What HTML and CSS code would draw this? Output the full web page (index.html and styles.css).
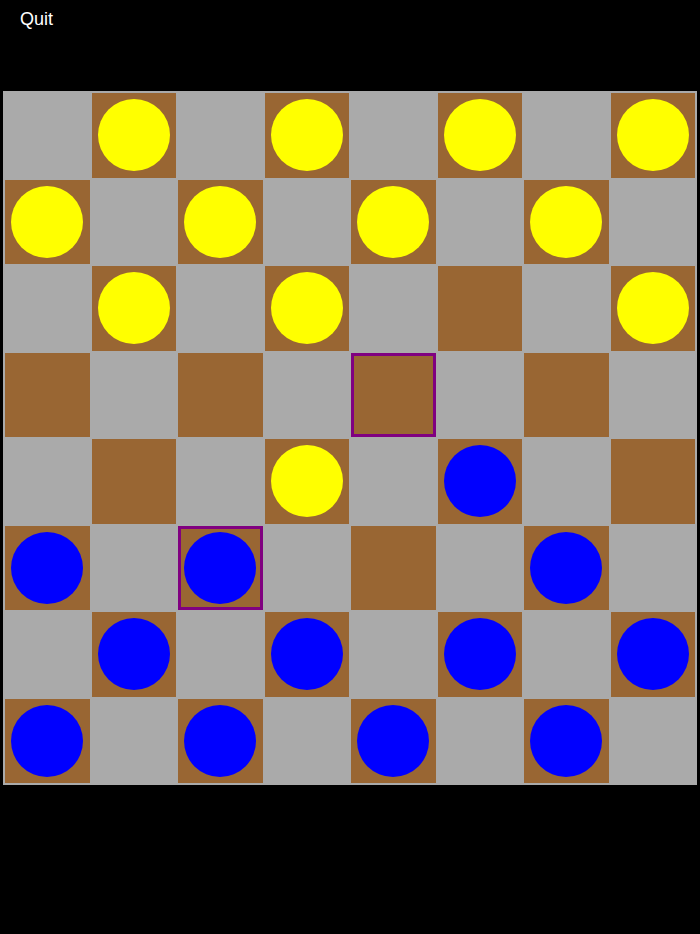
FILE: index.html
```html
<!DOCTYPE html>
<html>
<head>
<meta charset="utf-8">
<link rel="stylesheet" href="styles.css">
</head>
<body>
<div class="header"><span class="quit">Quit</span></div>
<div class="board">
  <div class="cell"></div><div class="cell dark"><div class="piece yellow"></div></div><div class="cell"></div><div class="cell dark"><div class="piece yellow"></div></div><div class="cell"></div><div class="cell dark"><div class="piece yellow"></div></div><div class="cell"></div><div class="cell dark"><div class="piece yellow"></div></div>
  <div class="cell dark"><div class="piece yellow"></div></div><div class="cell"></div><div class="cell dark"><div class="piece yellow"></div></div><div class="cell"></div><div class="cell dark"><div class="piece yellow"></div></div><div class="cell"></div><div class="cell dark"><div class="piece yellow"></div></div><div class="cell"></div>
  <div class="cell"></div><div class="cell dark"><div class="piece yellow"></div></div><div class="cell"></div><div class="cell dark"><div class="piece yellow"></div></div><div class="cell"></div><div class="cell dark"></div><div class="cell"></div><div class="cell dark"><div class="piece yellow"></div></div>
  <div class="cell dark"></div><div class="cell"></div><div class="cell dark"></div><div class="cell"></div><div class="cell dark sel"></div><div class="cell"></div><div class="cell dark"></div><div class="cell"></div>
  <div class="cell"></div><div class="cell dark"></div><div class="cell"></div><div class="cell dark"><div class="piece yellow"></div></div><div class="cell"></div><div class="cell dark"><div class="piece blue"></div></div><div class="cell"></div><div class="cell dark"></div>
  <div class="cell dark"><div class="piece blue"></div></div><div class="cell"></div><div class="cell dark sel"><div class="piece blue"></div></div><div class="cell"></div><div class="cell dark"></div><div class="cell"></div><div class="cell dark"><div class="piece blue"></div></div><div class="cell"></div>
  <div class="cell"></div><div class="cell dark"><div class="piece blue"></div></div><div class="cell"></div><div class="cell dark"><div class="piece blue"></div></div><div class="cell"></div><div class="cell dark"><div class="piece blue"></div></div><div class="cell"></div><div class="cell dark"><div class="piece blue"></div></div>
  <div class="cell dark"><div class="piece blue"></div></div><div class="cell"></div><div class="cell dark"><div class="piece blue"></div></div><div class="cell"></div><div class="cell dark"><div class="piece blue"></div></div><div class="cell"></div><div class="cell dark"><div class="piece blue"></div></div><div class="cell"></div>
</div>
</body>
</html>
```
FILE: styles.css
```css
html, body {
  margin: 0;
  padding: 0;
  background: #000;
}
body {
  width: 700px;
  height: 934px;
  font-family: "Liberation Sans", Arial, sans-serif;
}
.header {
  height: 91px;
  box-sizing: border-box;
  padding: 8px 0 0 20px;
}
.quit {
  color: #fff;
  font-size: 18px;
  line-height: 22px;
}
.board {
  margin-left: 3px;
  width: 694px;
  height: 694px;
  box-sizing: border-box;
  padding: 1px;
  background: #aaaaaa;
  display: grid;
  grid-template-columns: repeat(8, 86.5px);
  grid-template-rows: repeat(8, 86.5px);
}
.cell {
  margin: 1px;
  display: flex;
  align-items: center;
  justify-content: center;
  box-sizing: border-box;
}
.dark {
  background: #996633;
}
.sel {
  border: 3.5px solid #800080;
}
.piece {
  width: 72px;
  height: 72px;
  border-radius: 50%;
  flex: none;
}
.yellow {
  background: #ffff00;
}
.blue {
  background: #0000ff;
}
```
